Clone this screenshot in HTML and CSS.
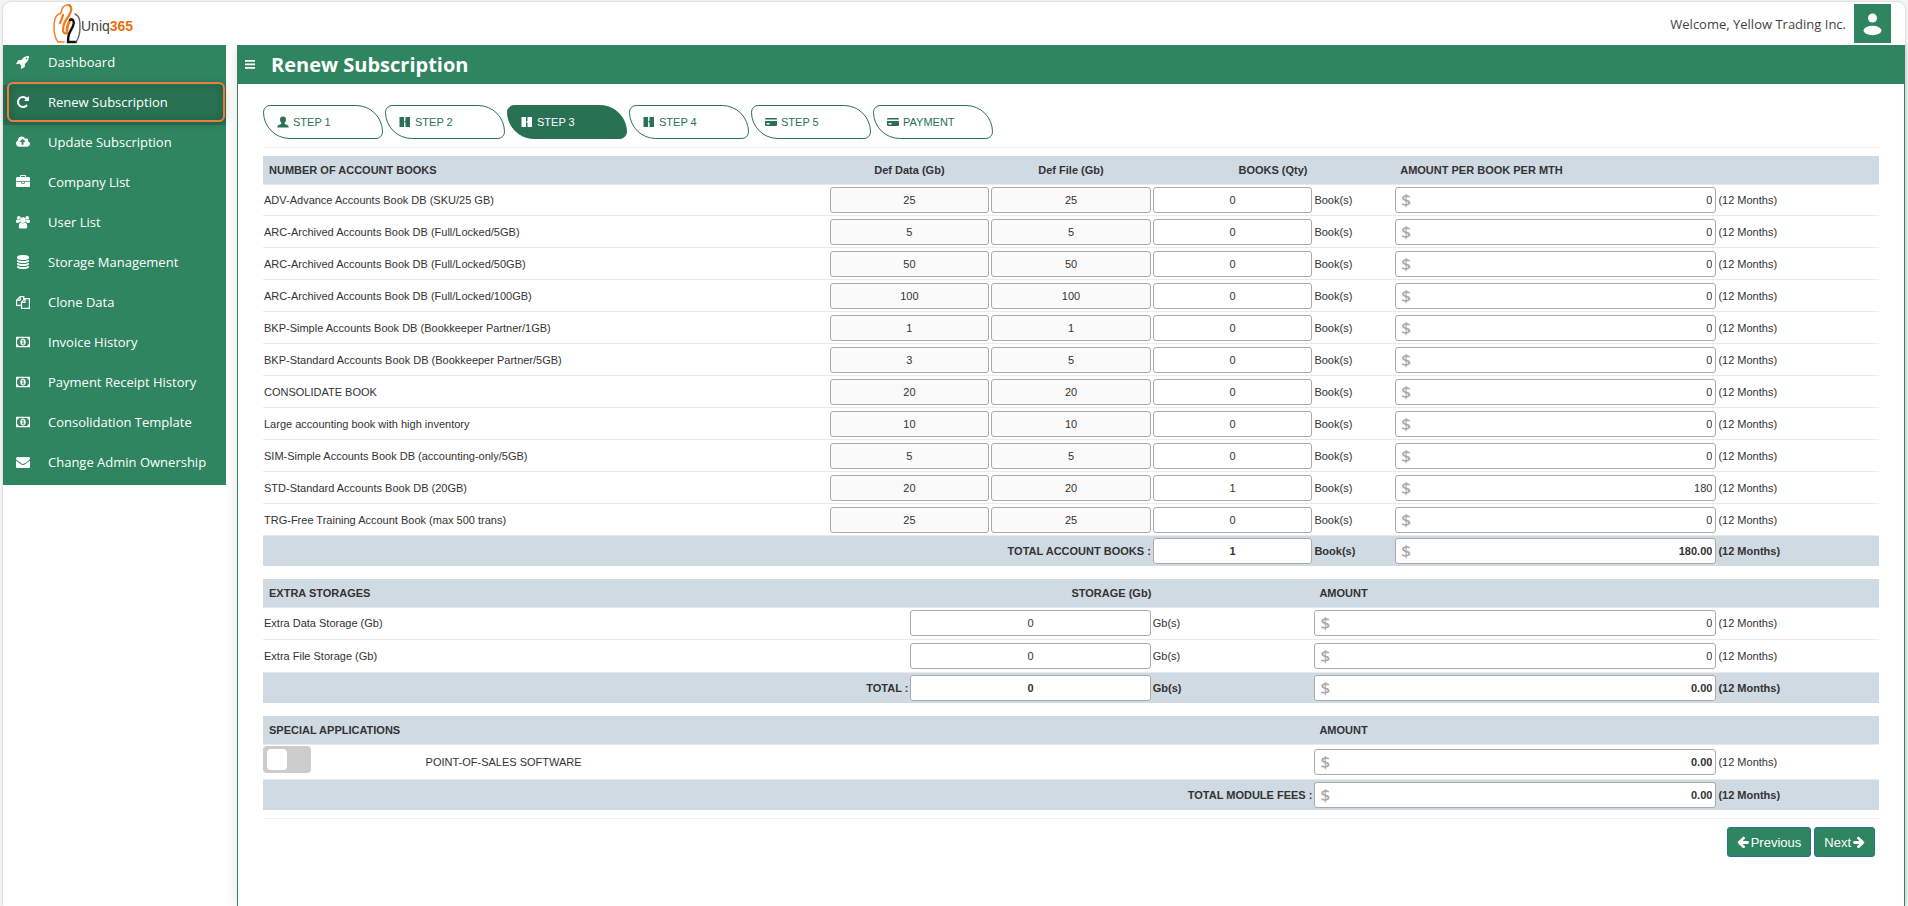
FILE: index.html
```html
<!doctype html>
<html lang="en">
<head>
    <meta charset="UTF-8">
    <meta name="viewport" content="width=device-width, initial-scale=1.0">
    <title>Renew Subscription</title>
    <link rel="stylesheet" href="styles.css">
</head>
<body>
<!-- Shared icons -->
<svg class="sprite" aria-hidden="true">
    <symbol id="money" viewBox="0 0 15 11">
        <path fill-rule="evenodd" d="M0 0h15v11H0zM3 1.2A2 2 0 0 1 1.2 3v5A2 2 0 0 1 3 9.800h9A2 2 0 0 1 13.800 8V3A2 2 0 0 1 12 1.200z"/>
        <path fill-rule="evenodd" d="M7.500 1.800c1.800 0 3 1.700 3 3.700s-1.200 3.700-3 3.700-3-1.700-3-3.700 1.200-3.700 3-3.700zM7.200 3.200L6.200 4v.7l.8-.4v2.700h-.8v.8h2.700v-.8h-.8V3.200z"/>
    </symbol>
    <symbol id="book" viewBox="0 0 12 12">
        <path d="M.5 1H5v4h.5v1.500H5V11H.5zM6.500 1H11v10H6.500V6.500H6V5h.5z"/>
    </symbol>
    <symbol id="card" viewBox="0 0 12 10">
        <path fill-rule="evenodd" d="M1 1h10q1 0 1 1v.5H0V2q0-1 1-1zM0 4h12v4q0 1-1 1H1q-1 0-1-1zM1.500 6v1.500h3V6z"/>
    </symbol>
    <symbol id="arrow" viewBox="100 100 1600 1600">
        <path d="M1664 896v128q0 53-32.500 90.500t-84.500 37.500h-704l293 294q38 36 38 90t-38 90l-75 76q-37 37-90 37-52 0-91-37l-651-652q-37-37-37-90 0-52 37-91l651-650q38-38 91-38 52 0 90 38l75 74q38 38 38 91t-38 91l-293 293h704q52 0 84.500 37.500t32.500 90.500z"/>
    </symbol>
</svg>

<div class="page">
    <header class="topbar">
        <a class="logo" href="#">
            <svg class="logo-mark" viewBox="0 0 28 40" fill="none" stroke-linecap="round">
                <path d="M11 38H5C2 34 1 29 1 24 1 16 2 11 6 10 9 10 8 7 9 5c1-3 4-4 7-4" stroke="#f0802a" stroke-width="1.500"/>
                <path d="M16 1c4 2 2 8-1 12-4 5-5 9-5 13 0 3 2 4 4 3M10 11c-1 3-1 5-3 8" stroke="#f27a12" stroke-width="2.200"/>
                <path d="M18 15c-3 4-4 8-4 12" stroke="#f27a12" stroke-width="2.800"/>
                <path d="M17 16c3-2 5 2 3 6l-4 8c-1 3-1 5-1 8h8" stroke="#111" stroke-width="2.400"/>
                <path d="M22 10c5 2 5 8 5 13s-1 11-4 15" stroke="#666" stroke-width="1.400"/>
            </svg>
            <span class="logo-text">Uniq<b>365</b></span>
        </a>
        <div class="user">
            <span>Welcome, Yellow Trading Inc.</span>
            <button class="avatar" type="button" aria-label="Account">
                <svg viewBox="0 0 37 39" fill="#fff"><circle cx="18.500" cy="14" r="4.500"/><ellipse cx="18.500" cy="26.500" rx="9" ry="4.700"/></svg>
            </button>
        </div>
    </header>

    <div class="layout">
        <nav class="sidebar">
            <a href="#"><svg viewBox="0 0 1792 1792"><path d="M1440 448q0-40-28-68t-68-28-68 28-28 68 28 68 68 28 68-28 28-68zm224-288q0 249-75.500 430.500t-253.500 360.500q-81 80-195 176l-20 379q-2 16-16 26l-384 224q-7 4-16 4-12 0-23-9l-64-64q-13-14-8-32l85-276-281-281-276 85q-3 1-9 1-14 0-23-9l-64-64q-17-19-5-39l224-384q10-14 26-16l379-20q96-114 176-195 188-187 358-258t431-71q14 0 24 9.500t10 22.500z"/></svg>Dashboard</a>
            <a class="active" href="#"><svg viewBox="0 0 1792 1792"><path d="M1664 256v448q0 26-19 45t-45 19h-448q-42 0-59-40-17-39 14-69l138-138q-148-137-349-137-104 0-198.500 40.500t-163.500 109.500-109.500 163.500-40.500 198.500 40.500 198.500 109.500 163.500 163.500 109.500 198.500 40.500q119 0 225-52t179-147q7-10 23-12 15 0 25 9l137 138q9 8 9.500 20.500t-7.500 22.500q-109 132-264 204.500t-327 72.500q-156 0-298-61t-245-164-164-245-61-298 61-298 164-245 245-164 298-61q147 0 284.500 55.500t244.500 156.500l130-129q29-31 70-14 39 17 39 59z"/></svg>Renew Subscription</a>
            <a href="#"><svg viewBox="-64 0 1920 1792"><path d="M1216 864q0-14-9-23l-352-352q-9-9-23-9t-23 9l-351 351q-10 12-10 24 0 14 9 23t23 9h224v352q0 13 9.500 22.500t22.500 9.500h192q13 0 22.500-9.500t9.500-22.500v-352h224q13 0 22.500-9.500t9.500-22.500zm640 288q0 159-112.500 271.500t-271.500 112.500h-1088q-185 0-316.500-131.500t-131.500-316.500q0-130 70-240t188-165q-2-30-2-43 0-212 150-362t362-150q156 0 285.500 87t188.500 231q71-62 166-62 106 0 181 75t75 181q0 76-41 138 130 31 213.500 135.500t83.500 238.500z"/></svg>Update Subscription</a>
            <a href="#"><svg viewBox="0 0 1792 1792"><path d="M640 256h512v-128h-512v128zm1152 640v480q0 66-47 113t-113 47h-1472q-66 0-113-47t-47-113v-480h672v160q0 26 19 45t45 19h320q26 0 45-19t19-45v-160h672zm-768 0v128h-256v-128h256zm768-480v384h-1792v-384q0-66 47-113t113-47h352v-160q0-40 28-68t68-28h576q40 0 68 28t28 68v160h352q66 0 113 47t47 113z"/></svg>Company List</a>
            <a href="#"><svg viewBox="0 0 15 14"><circle cx="7.500" cy="5" r="3"/><circle cx="3" cy="2.500" r="2"/><circle cx="12" cy="2.500" r="2"/><path d="M3 12c0-3 1-4.500 2.200-4.500 1.300 1.200 3.300 1.200 4.600 0C11 7.500 12 9 12 12c0 1.300-.8 2-2 2H5c-1.200 0-2-.7-2-2zM0 6.500C0 5 .5 4.200 1.200 4.200c1 .7 2 .8 2.800.4 0 .9.200 1.600.7 2.300-.9 0-1.600.4-2.200 1.100H1.300C.5 8 0 7.500 0 6.500zM15 6.500c0-1.500-.5-2.300-1.200-2.300-1 .7-2 .8-2.800.4 0 .9-.2 1.600-.7 2.300.9 0 1.600.4 2.200 1.100h1.200c.8 0 1.300-.5 1.300-1.500z"/></svg>User List</a>
            <a href="#"><svg viewBox="0 0 1792 1792"><path d="M896 768q237 0 443-43t325-127v170q0 69-103 128t-280 93.500-385 34.500-385-34.500-280-93.500-103-128v-170q119 84 325 127t443 43zm0 768q237 0 443-43t325-127v170q0 69-103 128t-280 93.500-385 34.500-385-34.500-280-93.500-103-128v-170q119 84 325 127t443 43zm0-384q237 0 443-43t325-127v170q0 69-103 128t-280 93.500-385 34.500-385-34.500-280-93.500-103-128v-170q119 84 325 127t443 43zm0-1152q208 0 385 34.500t280 93.500 103 128v128q0 69-103 128t-280 93.500-385 34.500-385-34.500-280-93.500-103-128v-128q0-69 103-128t280-93.500 385-34.500z"/></svg>Storage Management</a>
            <a href="#"><svg class="outline" viewBox="0 0 14 14"><path d="M5.500 10.400H.6V5.200L4.200 1.600h3.600V4M4.200 1.600v3.600H.6M5.500 13.400V7.200L9 3.600h4.400v9.800zM9 3.600v3.800H5.500"/></svg>Clone Data</a>
            <a href="#"><svg><use href="#money"/></svg>Invoice History</a>
            <a href="#"><svg><use href="#money"/></svg>Payment Receipt History</a>
            <a href="#"><svg><use href="#money"/></svg>Consolidation Template</a>
            <a href="#"><svg viewBox="0 0 1792 1792"><path d="M1792 710v794q0 66-47 113t-113 47h-1472q-66 0-113-47t-47-113v-794q44 49 101 87 362 246 497 345 57 42 92.500 65.500t94.500 48 110 24.500h2q51 0 110-24.500t94.500-48 92.500-65.500q170-123 498-345 57-39 100-87zm0-294q0 79-49 151t-122 123q-376 261-468 325-10 7-42.500 31t-54 38.500-52 32.500-57.500 27-50 9h-2q-23 0-50-9t-57.500-27-52-32.500-54-38.500-42.500-31q-91-64-262-182.500t-205-142.500q-62-42-117-115.500t-55-136.500q0-78 41.500-130t118.500-52h1472q65 0 112.500 47t47.500 113z"/></svg>Change Admin Ownership</a>
        </nav>

        <main class="content">
            <div class="titlebar">
                <button class="menu" type="button" aria-label="Toggle menu">
                    <svg viewBox="0 0 10 9"><path d="M0 0h10v1.700H0zM0 3.500h10v1.700H0zM0 7h10v1.700H0z" fill="#fff"/></svg>
                </button>
                <h1>Renew Subscription</h1>
            </div>

            <form class="panel">
                <div class="steps">
                    <a href="#"><svg viewBox="0 0 12 12"><path d="M6 .5c2 0 3 1.300 3 3 0 1.500-.6 2.600-1.400 3.300V8c1.700.5 4.100 1.100 4.100 3v.5H.3V11c0-1.900 2.400-2.500 4.100-3V6.800C3.600 6.100 3 5 3 3.500c0-1.700 1-3 3-3z"/></svg>STEP 1</a>
                    <a href="#"><svg><use href="#book"/></svg>STEP 2</a>
                    <a class="current" href="#"><svg><use href="#book"/></svg>STEP 3</a>
                    <a href="#"><svg><use href="#book"/></svg>STEP 4</a>
                    <a href="#"><svg><use href="#card"/></svg>STEP 5</a>
                    <a href="#"><svg><use href="#card"/></svg>PAYMENT</a>
                </div>

                <table class="books">
                    <colgroup>
                        <col class="w35"><col class="w10"><col class="w10"><col class="w10"><col class="w5"><col class="w20"><col class="w10">
                    </colgroup>
                    <thead>
                    <tr>
                        <th>NUMBER OF ACCOUNT BOOKS</th>
                        <th class="center">Def Data (Gb)</th>
                        <th class="center">Def File (Gb)</th>
                        <th class="center" colspan="2">BOOKS (Qty)</th>
                        <th colspan="2">AMOUNT PER BOOK PER MTH</th>
                    </tr>
                    </thead>
                    <tbody>
                    <tr>
                        <td><label for="qty1">ADV-Advance Accounts Book DB (SKU/25 GB)</label></td>
                        <td><input value="25" aria-label="Def Data" readonly></td>
                        <td><input value="25" aria-label="Def File" readonly></td>
                        <td><input id="qty1" value="0"></td>
                        <td>Book(s)</td>
                        <td><div class="amount"><span>$</span><input value="0" aria-label="Amount"></div></td>
                        <td>(12 Months)</td>
                    </tr>
                    <tr>
                        <td><label for="qty2">ARC-Archived Accounts Book DB (Full/Locked/5GB)</label></td>
                        <td><input value="5" aria-label="Def Data" readonly></td>
                        <td><input value="5" aria-label="Def File" readonly></td>
                        <td><input id="qty2" value="0"></td>
                        <td>Book(s)</td>
                        <td><div class="amount"><span>$</span><input value="0" aria-label="Amount"></div></td>
                        <td>(12 Months)</td>
                    </tr>
                    <tr>
                        <td><label for="qty3">ARC-Archived Accounts Book DB (Full/Locked/50GB)</label></td>
                        <td><input value="50" aria-label="Def Data" readonly></td>
                        <td><input value="50" aria-label="Def File" readonly></td>
                        <td><input id="qty3" value="0"></td>
                        <td>Book(s)</td>
                        <td><div class="amount"><span>$</span><input value="0" aria-label="Amount"></div></td>
                        <td>(12 Months)</td>
                    </tr>
                    <tr>
                        <td><label for="qty4">ARC-Archived Accounts Book DB (Full/Locked/100GB)</label></td>
                        <td><input value="100" aria-label="Def Data" readonly></td>
                        <td><input value="100" aria-label="Def File" readonly></td>
                        <td><input id="qty4" value="0"></td>
                        <td>Book(s)</td>
                        <td><div class="amount"><span>$</span><input value="0" aria-label="Amount"></div></td>
                        <td>(12 Months)</td>
                    </tr>
                    <tr>
                        <td><label for="qty5">BKP-Simple Accounts Book DB (Bookkeeper Partner/1GB)</label></td>
                        <td><input value="1" aria-label="Def Data" readonly></td>
                        <td><input value="1" aria-label="Def File" readonly></td>
                        <td><input id="qty5" value="0"></td>
                        <td>Book(s)</td>
                        <td><div class="amount"><span>$</span><input value="0" aria-label="Amount"></div></td>
                        <td>(12 Months)</td>
                    </tr>
                    <tr>
                        <td><label for="qty6">BKP-Standard Accounts Book DB (Bookkeeper Partner/5GB)</label></td>
                        <td><input value="3" aria-label="Def Data" readonly></td>
                        <td><input value="5" aria-label="Def File" readonly></td>
                        <td><input id="qty6" value="0"></td>
                        <td>Book(s)</td>
                        <td><div class="amount"><span>$</span><input value="0" aria-label="Amount"></div></td>
                        <td>(12 Months)</td>
                    </tr>
                    <tr>
                        <td><label for="qty7">CONSOLIDATE BOOK</label></td>
                        <td><input value="20" aria-label="Def Data" readonly></td>
                        <td><input value="20" aria-label="Def File" readonly></td>
                        <td><input id="qty7" value="0"></td>
                        <td>Book(s)</td>
                        <td><div class="amount"><span>$</span><input value="0" aria-label="Amount"></div></td>
                        <td>(12 Months)</td>
                    </tr>
                    <tr>
                        <td><label for="qty8">Large accounting book with high inventory</label></td>
                        <td><input value="10" aria-label="Def Data" readonly></td>
                        <td><input value="10" aria-label="Def File" readonly></td>
                        <td><input id="qty8" value="0"></td>
                        <td>Book(s)</td>
                        <td><div class="amount"><span>$</span><input value="0" aria-label="Amount"></div></td>
                        <td>(12 Months)</td>
                    </tr>
                    <tr>
                        <td><label for="qty9">SIM-Simple Accounts Book DB (accounting-only/5GB)</label></td>
                        <td><input value="5" aria-label="Def Data" readonly></td>
                        <td><input value="5" aria-label="Def File" readonly></td>
                        <td><input id="qty9" value="0"></td>
                        <td>Book(s)</td>
                        <td><div class="amount"><span>$</span><input value="0" aria-label="Amount"></div></td>
                        <td>(12 Months)</td>
                    </tr>
                    <tr>
                        <td><label for="qty10">STD-Standard Accounts Book DB (20GB)</label></td>
                        <td><input value="20" aria-label="Def Data" readonly></td>
                        <td><input value="20" aria-label="Def File" readonly></td>
                        <td><input id="qty10" value="1"></td>
                        <td>Book(s)</td>
                        <td><div class="amount"><span>$</span><input value="180" aria-label="Amount"></div></td>
                        <td>(12 Months)</td>
                    </tr>
                    <tr>
                        <td><label for="qty11">TRG-Free Training Account Book (max 500 trans)</label></td>
                        <td><input value="25" aria-label="Def Data" readonly></td>
                        <td><input value="25" aria-label="Def File" readonly></td>
                        <td><input id="qty11" value="0"></td>
                        <td>Book(s)</td>
                        <td><div class="amount"><span>$</span><input value="0" aria-label="Amount"></div></td>
                        <td>(12 Months)</td>
                    </tr>
                    </tbody>
                    <tfoot>
                    <tr>
                        <td class="right" colspan="3"><label for="totalBooks">TOTAL ACCOUNT BOOKS :</label></td>
                        <td><input id="totalBooks" value="1"></td>
                        <td>Book(s)</td>
                        <td><div class="amount"><span>$</span><input value="180.00" aria-label="Total amount"></div></td>
                        <td>(12 Months)</td>
                    </tr>
                    </tfoot>
                </table>

                <table class="storages">
                    <colgroup>
                        <col class="w40"><col class="w15"><col class="w10"><col class="w25"><col class="w10">
                    </colgroup>
                    <thead>
                    <tr>
                        <th>EXTRA STORAGES</th>
                        <th class="center" colspan="2">STORAGE (Gb)</th>
                        <th colspan="2">AMOUNT</th>
                    </tr>
                    </thead>
                    <tbody>
                    <tr>
                        <td><label for="extraData">Extra Data Storage (Gb)</label></td>
                        <td><input id="extraData" value="0"></td>
                        <td>Gb(s)</td>
                        <td><div class="amount"><span>$</span><input value="0" aria-label="Amount"></div></td>
                        <td>(12 Months)</td>
                    </tr>
                    <tr>
                        <td><label for="extraFile">Extra File Storage (Gb)</label></td>
                        <td><input id="extraFile" value="0"></td>
                        <td>Gb(s)</td>
                        <td><div class="amount"><span>$</span><input value="0" aria-label="Amount"></div></td>
                        <td>(12 Months)</td>
                    </tr>
                    </tbody>
                    <tfoot>
                    <tr>
                        <td class="right"><label for="totalStorage">TOTAL :</label></td>
                        <td><input id="totalStorage" value="0"></td>
                        <td>Gb(s)</td>
                        <td><div class="amount"><span>$</span><input value="0.00" aria-label="Total amount"></div></td>
                        <td>(12 Months)</td>
                    </tr>
                    </tfoot>
                </table>

                <table class="apps">
                    <colgroup>
                        <col class="w10"><col class="w55"><col class="w25"><col class="w10">
                    </colgroup>
                    <thead>
                    <tr>
                        <th colspan="2">SPECIAL APPLICATIONS</th>
                        <th colspan="2">AMOUNT</th>
                    </tr>
                    </thead>
                    <tbody>
                    <tr>
                        <td class="toggle"><input type="checkbox" id="pos"></td>
                        <td><label for="pos">POINT-OF-SALES SOFTWARE</label></td>
                        <td><div class="amount"><span>$</span><input value="0.00" aria-label="Amount"></div></td>
                        <td>(12 Months)</td>
                    </tr>
                    </tbody>
                    <tfoot>
                    <tr>
                        <td class="right" colspan="2"><label for="totalModule">TOTAL MODULE FEES :</label></td>
                        <td><div class="amount"><span>$</span><input id="totalModule" value="0.00"></div></td>
                        <td>(12 Months)</td>
                    </tr>
                    </tfoot>
                </table>

                <div class="actions">
                    <button type="button"><svg><use href="#arrow"/></svg>Previous</button>
                    <button type="button">Next<svg class="flip"><use href="#arrow"/></svg></button>
                </div>
            </form>
        </main>
    </div>
</div>
</body>
</html>
```
FILE: styles.css
```css
* {
    box-sizing: border-box;
}

body {
    margin: 0;
    min-height: 100vh;
    padding: 2px 3px 0;
    display: flex;
    background-color: #f5f5f5;
    font-family: "Liberation Sans", Arial, sans-serif;
    font-size: 11px;
    color: #333;
}

a {
    text-decoration: none;
}

.sprite {
    display: none;
}

.page {
    flex: 1;
    display: flex;
    flex-direction: column;
    background-color: #fff;
    border-radius: 8px 8px 0 0;
    box-shadow: 0 0 3px rgba(0, 0, 0, 0.2);
}

/* Top bar */
.topbar {
    display: flex;
    justify-content: space-between;
    align-items: center;
    height: 43px;
    padding: 0 14px 0 50px;
    font-family: "Open Sans", sans-serif;
    font-size: 13px;
    color: #444;
}

.logo {
    display: flex;
    align-items: center;
    color: #444;
}

.logo-mark {
    width: 28px;
    height: 40px;
}

.logo-text {
    font-family: "Liberation Sans Narrow", "Liberation Sans", sans-serif;
    font-size: 14px;
    line-height: 24px;
    padding-top: 4px;
}

.logo-text b {
    color: #e8700f;
}

.user {
    display: flex;
    align-items: center;
    gap: 8px;
}

.avatar {
    width: 37px;
    height: 39px;
    padding: 0;
    border: none;
    background-color: #2e855f;
}

.avatar svg {
    display: block;
}

/* Sidebar */
.layout {
    flex: 1;
    display: flex;
    gap: 11px;
}

.sidebar {
    width: 223px;
    flex: none;
    align-self: flex-start;
    background-color: #2e855f;
}

.sidebar a {
    display: flex;
    align-items: center;
    gap: 18px;
    height: 40px;
    padding: 0 13px 6px;
    color: #fff;
    font-family: "Open Sans", sans-serif;
    font-size: 13px;
}

.sidebar svg {
    width: 14px;
    height: 14px;
    fill: #fff;
}

.sidebar .outline {
    fill: none;
    stroke: #fff;
    stroke-width: 1.2;
}

.sidebar a.active {
    position: relative;
    background-color: #287253;
}

.sidebar a.active::after {
    content: "";
    position: absolute;
    inset: -3px 1px 3px 4px;
    border: 2px solid #ec7c3a;
    border-radius: 6px;
    box-shadow: inset 0 0 10px rgba(0, 0, 0, 0.2), 0 2px 8px rgba(0, 0, 0, 0.2);
}

/* Content */
.content {
    flex: 1;
    border: 1px solid #2e855f;
    border-width: 0 1px;
    box-shadow: 0 0 12px rgba(0, 0, 0, 0.12);
    clip-path: inset(0 -3px 0 -11px);
}

.titlebar {
    display: flex;
    align-items: center;
    gap: 16px;
    height: 39px;
    padding: 0 7px;
    background-color: #2e855f;
    color: #fff;
}

.titlebar h1 {
    margin: 0;
    font-family: "Open Sans", sans-serif;
    font-size: 20px;
    font-weight: 700;
}

.menu {
    padding: 0;
    border: none;
    background: none;
}

.menu svg {
    display: block;
    width: 10px;
    height: 9px;
}

.panel {
    padding: 21px 25px;
}

.steps {
    display: flex;
    gap: 2px;
    padding-bottom: 8px;
    border-bottom: 1px solid #eee;
}

.steps a {
    display: flex;
    align-items: center;
    gap: 4px;
    width: 120px;
    height: 34px;
    padding: 0 13px;
    border: 1px solid #287253;
    border-radius: 8px 30px;
    color: #287253;
}

.steps a.current {
    background-color: #287253;
    color: #fff;
}

.steps svg {
    width: 12px;
    height: 12px;
    fill: currentColor;
}

/* Tables */
table {
    width: 100%;
    table-layout: fixed;
    border-collapse: collapse;
}

.books {
    height: 410px;
    margin: 8px 0 13px;
}

.storages {
    height: 124px;
    margin-bottom: 13px;
}

.apps {
    height: 94px;
    margin-bottom: 8px;
}

.w5 { width: 5%; }
.w10 { width: 10%; }
.w15 { width: 15%; }
.w20 { width: 20%; }
.w25 { width: 25%; }
.w35 { width: 35%; }
.w40 { width: 40%; }
.w55 { width: 55%; }

thead,
tfoot {
    background-color: #d0dae3;
    font-weight: bold;
}

th,
td {
    text-align: left;
    border-bottom: 1px solid #e7ebef;
}

th {
    height: 28px;
    padding: 0 6px;
}

td {
    padding: 2px 1px;
}

tfoot td {
    border-bottom: none;
}

.center {
    text-align: center;
}

.right {
    text-align: right;
}

td input {
    display: block;
    width: 100%;
    height: 26px;
    padding: 0 3px;
    border: 1px solid #aaa;
    border-radius: 3px;
    background-color: #fff;
    color: #333;
    font: inherit;
    text-align: center;
}

td input[readonly] {
    background-color: #fafafa;
}

.amount {
    display: flex;
    align-items: center;
    height: 26px;
    padding-left: 5px;
    border: 1px solid #aaa;
    border-radius: 3px;
    background-color: #fff;
}

.amount span {
    color: #aaa;
    font-family: "Open Sans", sans-serif;
    font-size: 17px;
    font-weight: 600;
    line-height: 24px;
}

.amount input {
    flex: 1;
    height: 24px;
    border: none;
    background: none;
    text-align: right;
}

.apps tbody .amount input {
    font-weight: bold;
}

.apps tbody td {
    padding: 3px 1px;
}

.apps tbody .toggle {
    padding: 1px 0;
    vertical-align: top;
}

.toggle input {
    appearance: none;
    width: 48px;
    height: 27px;
    margin: 0;
    padding: 3px 4px;
    border: none;
    border-radius: 4px;
    background-color: #ccc;
}

.toggle input::before {
    content: "";
    display: block;
    width: 20px;
    height: 21px;
    border-radius: 4px;
    background-color: #fff;
}

.toggle input:checked {
    padding-left: 24px;
    background-color: #2e855f;
}

/* Buttons */
.actions {
    display: flex;
    justify-content: flex-end;
    gap: 3px;
    padding: 8px 4px 0;
    border-top: 1px solid #eee;
}

.actions button {
    display: flex;
    align-items: center;
    gap: 2px;
    height: 30px;
    padding: 0 9px;
    border: 1px solid #2e6da4;
    border-radius: 3px;
    background-color: #2e855f;
    color: #fff;
    font-family: inherit;
    font-size: 13px;
}

.actions svg {
    width: 12px;
    height: 12px;
    fill: #fff;
}

.actions .flip {
    transform: scaleX(-1);
}
```
